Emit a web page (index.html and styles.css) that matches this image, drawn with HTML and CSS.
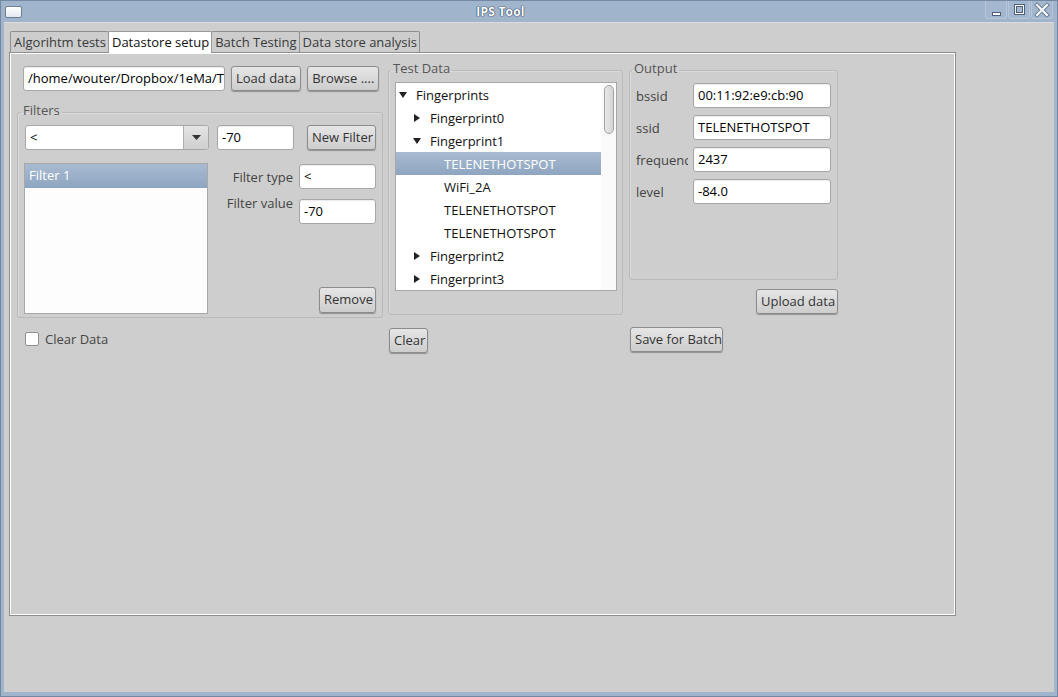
FILE: index.html
```html
<!DOCTYPE html>
<html>
<head>
<meta charset="utf-8">
<link rel="stylesheet" href="styles.css">
</head>
<body>
<div class="window">
  <div class="titlebar">
    <div class="appicon"></div>
    <div class="title">IPS Tool</div>
    <div class="wbtns">
      <div class="wbtn">
        <svg width="20" height="16" viewBox="0 0 20 16"><rect x="6.5" y="10.5" width="8" height="3" fill="#fff" stroke="#4e6079"/></svg>
      </div>
      <div class="wbtn">
        <svg width="20" height="16" viewBox="0 0 20 16"><rect x="5.5" y="2.5" width="10" height="10" fill="none" stroke="#4e6079"/><rect x="6.5" y="3.5" width="8" height="8" fill="none" stroke="#fff"/><rect x="7.5" y="4.5" width="6" height="6" fill="none" stroke="#4e6079"/></svg>
      </div>
      <div class="wbtn">
        <svg width="20" height="16" viewBox="0 0 20 16"><path d="M5 3 L15 13 M15 3 L5 13" stroke="#6a7d96" stroke-width="4" stroke-linecap="square"/><path d="M5 3 L15 13 M15 3 L5 13" stroke="#fff" stroke-width="2" stroke-linecap="square"/></svg>
      </div>
    </div>
  </div>
  <div class="client">
    <div class="tabwidget">
      <div class="tabbar">
        <div class="tab">Algorihtm tests</div>
        <div class="tab active">Datastore setup</div>
        <div class="tab">Batch Testing</div>
        <div class="tab">Data store analysis</div>
      </div>
      <div class="pane">
        <div class="col col1">
          <div class="pathrow">
            <div class="input path">/home/wouter/Dropbox/1eMa/T</div>
            <div class="btn">Load data</div>
            <div class="btn">Browse ....</div>
          </div>
          <fieldset class="group filters">
            <legend>Filters</legend>
            <div class="filterrow">
              <div class="combo">
                <div class="combotext">&lt;</div>
                <div class="comboarrow"><svg width="9" height="5" viewBox="0 0 9 5"><path d="M0 0 H9 L4.5 5 Z" fill="#333"/></svg></div>
              </div>
              <div class="input value">-70</div>
              <div class="btn newfilter">New Filter</div>
            </div>
            <div class="filterbody">
              <div class="list">
                <div class="listitem selected">Filter 1</div>
              </div>
              <div class="filterform">
                <div class="formrow">
                  <div class="formlabel">Filter type</div>
                  <div class="input small">&lt;</div>
                </div>
                <div class="formrow top">
                  <div class="formlabel">Filter value</div>
                  <div class="input small">-70</div>
                </div>
                <div class="btn remove">Remove</div>
              </div>
            </div>
          </fieldset>
          <div class="checkrow">
            <div class="checkbox"></div>
            <span class="checklabel">Clear Data</span>
          </div>
        </div>

        <div class="col col2">
          <fieldset class="group testdata">
            <legend>Test Data</legend>
            <div class="tree">
              <div class="rows">
                <div class="row l0"><span class="arrow"><svg width="8" height="8" viewBox="0 0 8 8"><path d="M0 1 H8 L4 7 Z" fill="#222"/></svg></span>Fingerprints</div>
                <div class="row l1"><span class="arrow"><svg width="8" height="8" viewBox="0 0 8 8"><path d="M1 0 V8 L7 4 Z" fill="#222"/></svg></span>Fingerprint0</div>
                <div class="row l1"><span class="arrow"><svg width="8" height="8" viewBox="0 0 8 8"><path d="M0 1 H8 L4 7 Z" fill="#222"/></svg></span>Fingerprint1</div>
                <div class="row l2 selected">TELENETHOTSPOT</div>
                <div class="row l2">WiFi_2A</div>
                <div class="row l2">TELENETHOTSPOT</div>
                <div class="row l2">TELENETHOTSPOT</div>
                <div class="row l1"><span class="arrow"><svg width="8" height="8" viewBox="0 0 8 8"><path d="M1 0 V8 L7 4 Z" fill="#222"/></svg></span>Fingerprint2</div>
                <div class="row l1"><span class="arrow"><svg width="8" height="8" viewBox="0 0 8 8"><path d="M1 0 V8 L7 4 Z" fill="#222"/></svg></span>Fingerprint3</div>
              </div>
              <div class="scrollbar"><div class="handle"></div></div>
            </div>
          </fieldset>
          <div class="btn clear">Clear</div>
        </div>

        <div class="col col3">
          <fieldset class="group output">
            <legend>Output</legend>
            <div class="outrow"><div class="outlabel">bssid</div><div class="input out">00:11:92:e9:cb:90</div></div>
            <div class="outrow"><div class="outlabel">ssid</div><div class="input out">TELENETHOTSPOT</div></div>
            <div class="outrow"><div class="outlabel">frequency</div><div class="input out">2437</div></div>
            <div class="outrow"><div class="outlabel">level</div><div class="input out">-84.0</div></div>
          </fieldset>
          <div class="btn upload">Upload data</div>
          <div class="btn save">Save for Batch</div>
        </div>
      </div>
    </div>
  </div>
</div>
</body>
</html>
```

FILE: styles.css
```css
* { box-sizing: border-box; }

body {
  margin: 0;
  width: 1058px;
  height: 697px;
  overflow: hidden;
  font-family: "Open Sans", "DejaVu Sans", sans-serif;
  font-size: 13px;
  color: #222;
}

.window {
  width: 1058px;
  height: 697px;
  background: #a0b4cb;
  border: 1px solid #7388a3;
  padding: 0 3px 4px 3px;
  display: flex;
  flex-direction: column;
}

.titlebar {
  height: 21px;
  display: flex;
  align-items: center;
  flex: none;
}

.appicon {
  width: 17px;
  height: 12px;
  margin-left: 1px;
  border: 1px solid #6f7f93;
  border-radius: 2px;
  background: linear-gradient(#ffffff, #e4e8ee);
}

.title {
  flex: 1;
  text-align: center;
  color: #fff;
  font-weight: bold;
  font-size: 12px;
  letter-spacing: 0.2px;
  text-shadow: 0 0 1px #2c3f5a, 0 0 1px #2c3f5a, 0 0 1px #2c3f5a;
  padding-right: 6px;
}

.wbtns {
  display: flex;
  gap: 1px;
  margin-right: 1px;
  align-self: flex-start;
}

.wbtn {
  width: 22px;
  height: 18px;
  border: 1px solid #b7c6d8;
  border-top: none;
  border-radius: 0 0 3px 3px;
  background: #a3b7ce;
  display: flex;
  align-items: center;
  justify-content: center;
}

.client {
  flex: 1;
  background: #cecece;
  border-top: 1px solid #dcdcdc;
  padding: 8px 0 0 5px;
}

.tabwidget {
  width: 947px;
}

.tabbar {
  display: flex;
  height: 21px;
  padding-left: 1px;
  align-items: flex-start;
}

.tab {
  height: 21px;
  padding: 0 2px 0 3px;
  border: 1px solid #8f8f8f;
  border-bottom: none;
  margin-right: -1px;
  border-radius: 2px 2px 0 0;
  background: #cdcdcd;
  color: #3a3a3a;
  line-height: 20px;
  white-space: nowrap;
}

.tab.active {
  height: 22px;
  background: #ffffff;
  color: #111;
  position: relative;
  z-index: 2;
  border-color: #9a9a9a;
}

.pane {
  height: 564px;
  border: 1px solid #8e8e8e;
  box-shadow: inset 1px 1px 0 #fff, inset -1px -1px 0 #fff;
  background: #cecece;
  display: flex;
  align-items: flex-start;
  padding: 7px 0 0 7px;
}

.col {
  display: flex;
  flex-direction: column;
}

.col1 { width: 366px; }
.col2 { width: 235px; margin-left: 5px; }
.col3 { width: 209px; margin-left: 6px; }

/* generic widgets */
.input {
  height: 25px;
  background: #fff;
  border: 1px solid #a6a6a6;
  border-radius: 3px;
  box-shadow: inset 0 1px 1px rgba(0,0,0,0.08);
  padding-left: 4px;
  line-height: 23px;
  color: #000;
  white-space: nowrap;
  overflow: hidden;
}

.btn {
  height: 25px;
  padding: 0 4px;
  border: 1px solid #8c8c8c;
  border-radius: 3px;
  background: linear-gradient(#e6e6e6, #cdcdcd);
  box-shadow: 0 1px 1px rgba(0,0,0,0.3);
  line-height: 23px;
  color: #333;
  white-space: nowrap;
  text-align: center;
}

.group {
  margin: 0;
  border: 1px solid #bababa;
  border-radius: 3px;
  box-shadow: inset 1px 1px 0 rgba(255,255,255,0.25);
  min-width: 0;
}

.group legend {
  padding: 0 2px 4px 2px;
  margin-left: -4px;
  line-height: 16px;
  color: #555;
}

/* column 1 */
.pathrow {
  display: flex;
  gap: 6px;
  margin: 6px 0 0 6px;
}

.path { width: 202px; }

.filters {
  margin-top: 11px;
  padding: 3px 6px 3px 7px;
}

.filterrow {
  display: flex;
  align-items: center;
}

.combo {
  width: 184px;
  height: 25px;
  display: flex;
  background: #fff;
  border: 1px solid #a6a6a6;
  border-radius: 3px;
  overflow: hidden;
}

.combotext {
  flex: 1;
  padding-left: 4px;
  line-height: 23px;
  color: #000;
}

.comboarrow {
  width: 25px;
  border-left: 1px solid #b0b0b0;
  background: linear-gradient(#e4e4e4, #cfcfcf);
  display: flex;
  align-items: center;
  justify-content: center;
}

.value {
  width: 77px;
  margin-left: 8px;
}

.newfilter { margin-left: auto; width: 69px; }

.filterbody {
  display: flex;
  margin-top: 13px;
  height: 151px;
}

.list {
  width: 184px;
  height: 151px;
  margin-left: -1px;
  background: #fdfdfd;
  border: 1px solid #a8a8a8;
}

.listitem {
  height: 24px;
  line-height: 23px;
  padding-left: 4px;
  color: #000;
}

.listitem.selected,
.row.selected {
  background: linear-gradient(#a8bbd1, #8ea5c0);
  color: #fff;
}

.filterform {
  flex: 1;
  display: flex;
  flex-direction: column;
  align-items: flex-end;
}

.formrow {
  display: flex;
  align-items: center;
  gap: 6px;
  margin-top: 1px;
}

.formrow.top {
  align-items: flex-start;
  margin-top: 10px;
}

.formrow.top .formlabel { margin-top: -5px; }

.formlabel {
  color: #444;
  white-space: nowrap;
}

.small { width: 77px; }

.remove {
  margin-top: auto;
  width: 57px;
  height: 26px;
  margin-bottom: 1px;
}

.checkrow {
  display: flex;
  align-items: center;
  margin: 12px 0 0 8px;
}

.checkbox {
  width: 14px;
  height: 14px;
  background: #fff;
  border: 1px solid #8e8e8e;
  border-radius: 2px;
}

.checklabel {
  margin-left: 6px;
  color: #444;
}

/* column 2 */
.testdata {
  padding: 2px 5px 23px 6px;
}

.tree {
  height: 209px;
  width: 222px;
  display: flex;
  background: #fff;
  border: 1px solid #a8a8a8;
}

.rows {
  flex: 1;
}

.row {
  height: 23px;
  display: flex;
  align-items: center;
  white-space: nowrap;
  color: #111;
}

.row.l0 { padding-left: 2px; }
.row.l1 { padding-left: 16px; }
.row.l2 { padding-left: 48px; }

.arrow {
  width: 18px;
  display: flex;
  align-items: center;
  padding-left: 1px;
}

.scrollbar {
  width: 15px;
  background: #fafafa;
  padding: 2px 0 0 3px;
}

.handle {
  width: 10px;
  height: 49px;
  border: 1px solid #a2a2a2;
  border-radius: 5px;
  background: linear-gradient(90deg, #e8e8e8, #d4d4d4);
}

.clear {
  margin-top: 13px;
  margin-left: 1px;
  align-self: flex-start;
  width: 39px;
}

/* column 3 */
.output {
  padding: 3px 6px 75px 6px;
}

.outrow {
  display: flex;
  align-items: center;
  margin-bottom: 7px;
}

.outrow:last-child { margin-bottom: 0; }

.outlabel {
  width: 52px;
  margin-right: 5px;
  overflow: hidden;
  white-space: nowrap;
  color: #444;
}

.out { width: 138px; }

.upload {
  margin-top: 9px;
  align-self: flex-end;
  width: 82px;
}

.save {
  margin-top: 13px;
  margin-left: 1px;
  align-self: flex-start;
  width: 93px;
}
```
